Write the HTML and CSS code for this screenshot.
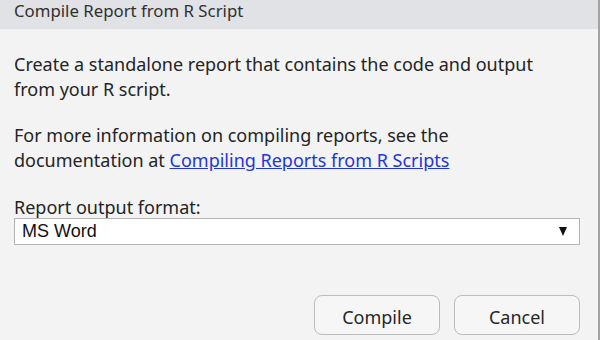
FILE: index.html
```html
<!DOCTYPE html>
<html lang="en">
<head>
    <meta charset="UTF-8">
    <title>Compile Report from R Script</title>
    <link rel="stylesheet" href="styles.css">
</head>
<body>
    <div class="dialog">
        <header class="title">Compile Report from R Script</header>
        <div class="content">
            <p>Create a standalone report that contains the code and output from your R script.</p>
            <p>For more information on compiling reports, see the documentation at <a href="#">Compiling Reports from R Scripts</a></p>

            <label class="field-label" for="format">Report output format:</label>
            <div class="select" id="format">
                <span>MS Word</span>
                <svg class="arrow" width="8" height="9" viewBox="0 0 8 9"><polygon points="0,0 8,0 4,9" fill="#111"/></svg>
            </div>
        </div>
        <div class="buttons">
            <button>Compile</button>
            <button>Cancel</button>
        </div>
    </div>
</body>
</html>
```

FILE: styles.css
```css
html, body {
    margin: 0;
    padding: 0;
}
body {
    font-family: "Noto Sans", "Open Sans", sans-serif;
    color: #242424;
    background: #f2f3f2;
}
.dialog {
    height: 340px;
    box-sizing: border-box;
    border-right: 2px solid #a3a3a3;
    overflow: hidden;
}
.title {
    height: 29px;
    line-height: 22px;
    padding-left: 14px;
    font-size: 16.8px;
    color: #303030;
    background: #e1e2e6;
}
.content {
    padding: 23px 18px 0 14px;
}
.content p {
    margin: 0 0 21px 0;
    max-width: 560px;
    font-size: 18px;
    line-height: 25px;
}
.content p + p {
    margin-bottom: 24px;
}
.content a {
    color: #2236d8;
}
.field-label {
    display: block;
    font-size: 18px;
    line-height: 20px;
}
.select {
    display: flex;
    justify-content: space-between;
    align-items: center;
    height: 27px;
    margin-top: 1px;
    padding: 0 12px 0 7px;
    box-sizing: border-box;
    background: white;
    border: 1px solid #b4b4b4;
    font-family: "Liberation Sans", Arial, sans-serif;
    font-size: 18px;
    color: #111;
}
.buttons {
    display: flex;
    justify-content: flex-end;
    gap: 14px;
    padding: 50px 18px 0 0;
}
button {
    width: 126px;
    height: 40px;
    padding: 3px 0 0 0;
    font-family: "Noto Sans", "Open Sans", sans-serif;
    font-size: 18px;
    color: #262626;
    background: #f6f6f6;
    border: 1px solid #bcbcbc;
    border-radius: 8px;
}
```
